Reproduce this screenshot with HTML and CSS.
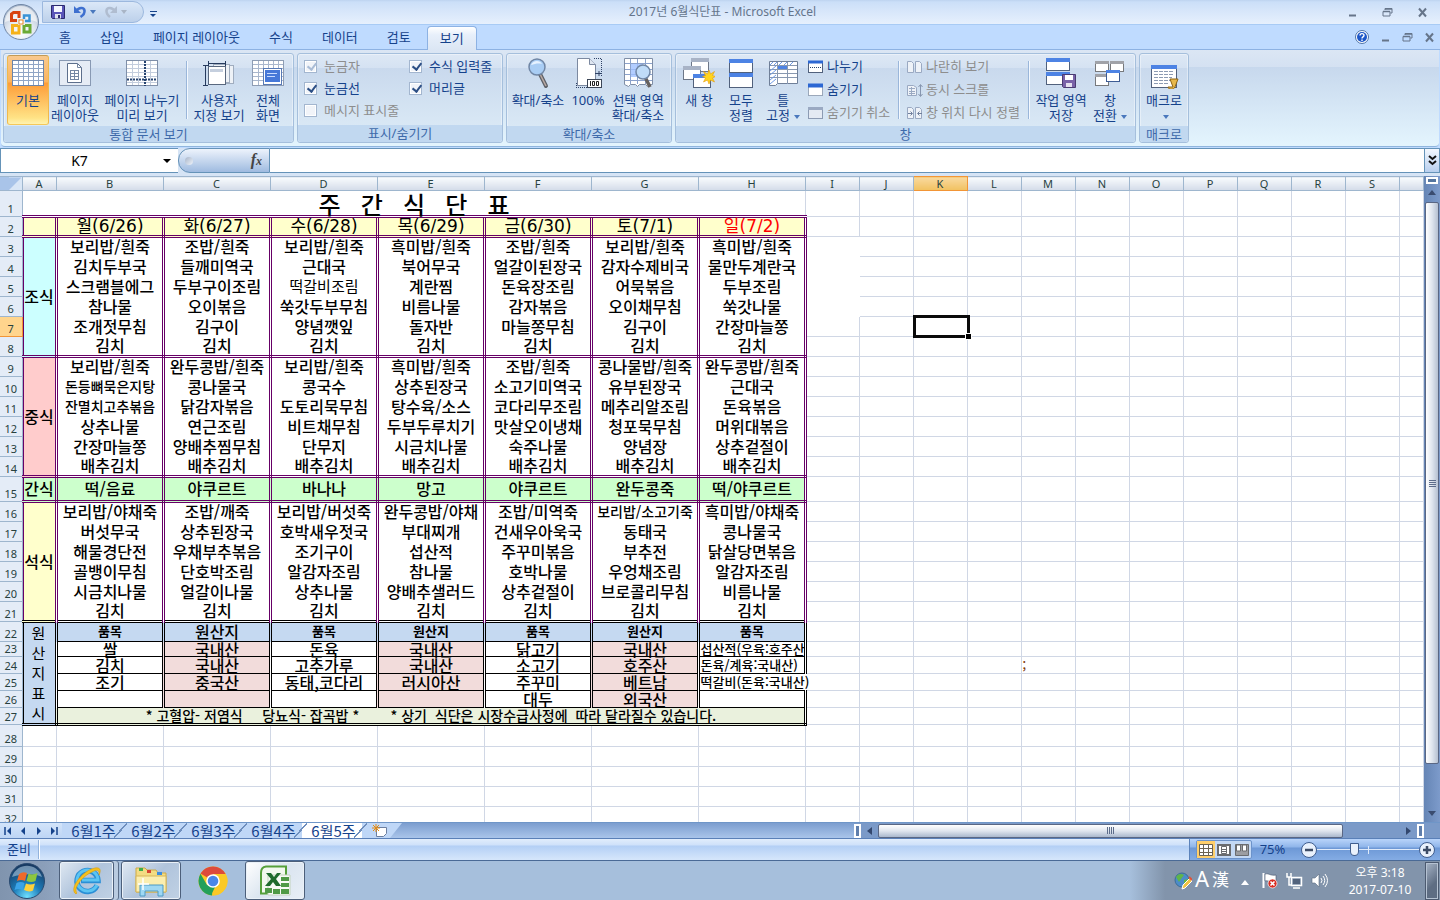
FILE: index.html
```html
<!DOCTYPE html>
<html lang="ko">
<head>
<meta charset="utf-8">
<title>2017년 6월식단표 - Microsoft Excel</title>
<link rel="stylesheet" href="styles.css">
</head>
<body>
<header class="titlebar">
  <button class="orb" aria-label="Office">
    <svg width="38" height="38" viewBox="0 0 38 38">
      <defs><radialGradient id="ob" cx=".5" cy=".8" r=".8"><stop offset="0" stop-color="#fff"/><stop offset=".5" stop-color="#dfe6ef"/><stop offset="1" stop-color="#a7b5c9"/></radialGradient></defs>
      <circle cx="19" cy="19" r="17.500" fill="url(#ob)" stroke="#6f86a6"/>
      <path d="M3 19a16 16 0 0 1 32 0c-8-4-22-4-32 0z" fill="#fff" opacity=".6"/>
      <g fill="none" stroke-width="3">
        <path d="M17 15V9.500h-5.500L9.500 11v6.500H15" stroke="#d8430f"/>
        <path d="M22 16v-3.500h5.500V18H23" stroke="#3a93d6" stroke-width="2.500"/>
        <path d="M17 22v8h-6.500v-7.500H16" stroke="#f5b21b"/>
        <path d="M22 22v7h6v-6.500h-5" stroke="#6aaa35"/>
      </g>
      <rect x="17" y="17" width="4" height="4" fill="#fff" stroke="#e98a24"/>
    </svg>
  </button>
  <div class="qat">
    <button aria-label="저장"><svg width="14" height="14" viewBox="0 0 14 14"><path d="M.5.500h13v13h-12l-1-1z" fill="#5a55b8" stroke="#2b2a6e"/><rect x="3" y="1" width="8" height="6" fill="#f4f6ff"/><rect x="4" y="9" width="6" height="4.500" fill="#dfe3ee"/><rect x="7" y="10" width="2" height="3" fill="#2b2a6e"/></svg></button>
    <button aria-label="실행 취소"><svg width="14" height="14" viewBox="0 0 14 14"><path d="M3 6c3-4 8-4 8.500-.5.300 2.500-1.500 5-4 6.500" fill="none" stroke="#3f70cf" stroke-width="2.600"/><path d="M1 1v7h7z" fill="#3f70cf"/></svg></button>
    <i class="caret"></i>
    <button aria-label="다시 실행" disabled><svg width="14" height="14" viewBox="0 0 14 14"><path d="M11 6C8 2 3 2 2.500 5.500 2.200 8 4 10.500 6 12" fill="none" stroke="#b0bdd0" stroke-width="2.600"/><path d="M13 1v7H6z" fill="#b0bdd0"/></svg></button>
    <i class="caret pale"></i>
  </div>
  <button class="qatmore" aria-label="빠른 실행 도구 모음 사용자 지정"><i></i></button>
  <h1>2017년 6월식단표 - Microsoft Excel</h1>
  <div class="wbtns">
    <button aria-label="최소화"><svg width="11" height="11" viewBox="0 0 11 11"><path d="M2 8.500h7" stroke="#66758a" stroke-width="2"/></svg></button>
    <button aria-label="이전 크기로"><svg width="11" height="11" viewBox="0 0 11 11"><path d="M3 3V1.500h7V6H8.500M1 4.500h7V9H1z" fill="none" stroke="#66758a"/><path d="M3 2h7M1 4.500h7" stroke="#66758a" stroke-width="1.500"/></svg></button>
    <button aria-label="닫기"><svg width="11" height="11" viewBox="0 0 11 11"><path d="M2 1.500l7 8M9 1.500l-7 8" stroke="#66758a" stroke-width="2"/></svg></button>
  </div>
</header>

<nav class="tabs">
  <button>홈</button><button>삽입</button><button>페이지 레이아웃</button><button>수식</button><button>데이터</button><button>검토</button><button class="on">보기</button>
  <div class="mdi">
    <button aria-label="도움말"><svg width="14" height="14" viewBox="0 0 14 14"><circle cx="7" cy="7" r="6.500" fill="#fff" stroke="#4f74a8"/><circle cx="7" cy="7" r="5" fill="#1d57c8"/><path d="M5 5.500C5 3 9 3 9 5.300 9 7 7 6.800 7 8.500M7 9.500V11" fill="none" stroke="#fff" stroke-width="1.400"/></svg></button>
    <button aria-label="창 최소화"><svg width="11" height="11" viewBox="0 0 11 11"><path d="M2 8.500h7" stroke="#66758a" stroke-width="2"/></svg></button>
    <button aria-label="창 복원"><svg width="11" height="11" viewBox="0 0 11 11"><path d="M3 3V1.500h7V6H8.500M1 4.500h7V9H1z" fill="none" stroke="#66758a"/><path d="M3 2h7M1 4.500h7" stroke="#66758a" stroke-width="1.500"/></svg></button>
    <button aria-label="창 닫기"><svg width="11" height="11" viewBox="0 0 11 11"><path d="M2 1.500l7 8M9 1.500l-7 8" stroke="#66758a" stroke-width="2"/></svg></button>
  </div>
</nav>

<section class="ribbon">
  <div class="group g1">
    <div class="body">
      <button class="big on w42"><svg width="32" height="32" viewBox="0 0 32 32"><rect x=".5" y="3.500" width="31" height="25" fill="#fff" stroke="#6c84a8"/><path d="M1 7.500h30M1 11.500h30M1 15.500h30M1 19.500h30M1 23.500h30M6.500 4v24M11.500 4v24M16.500 4v24M21.500 4v24M26.500 4v24" stroke="#8fa5c6"/></svg><span>기본</span></button>
      <button class="big w52"><svg width="32" height="32" viewBox="0 0 32 32"><rect x=".5" y="3.500" width="31" height="25" fill="#e6ecf5" stroke="#8899b3"/><path d="M8.500 6.500h10l4 4v15h-14z" fill="#fff" stroke="#5d6f8c"/><path d="M18.500 6.500v4h4M11 13.500h9M11 16.500h9M11 19.500h9M11 22.500h9M11.500 13v10M15.500 13v10M19.500 13v10" fill="none" stroke="#7587a3"/></svg><span>페이지<br>레이아웃</span></button>
      <button class="big w82"><svg width="32" height="32" viewBox="0 0 32 32"><rect x=".5" y="3.500" width="31" height="25" fill="#fff" stroke="#7f8fa8"/><path d="M1 7.500h30M1 11.500h30M1 15.500h30M1 19.500h30M1 25.500h30M6.500 4v24M12.500 4v24M24.500 4v24" stroke="#c3cddd"/><path d="M19 4v25M1 22.500h30" stroke="#26436f" stroke-width="2" stroke-dasharray="2 1"/></svg><span>페이지 나누기<br>미리 보기</span></button>
      <i class="sep"></i>
      <button class="big w58"><svg width="32" height="32" viewBox="0 0 32 32"><rect x="14.500" y="8.500" width="16" height="18" fill="#eef2f7" stroke="#a0adbf"/><rect x="10.500" y="7.500" width="16" height="18" fill="#eef2f7" stroke="#a0adbf"/><rect x="5.500" y="9.500" width="17" height="18" fill="#fff" stroke="#59687f"/><rect x="7" y="12" width="13" height="3" fill="#c5cfde"/><path d="M5 6.500h18M5.500 4v5M22.500 4v5M2.500 9v19M0 8.500h5M0 28.500h5" stroke="#273b5e"/></svg><span>사용자<br>지정 보기</span></button>
      <button class="big w42"><svg width="32" height="32" viewBox="0 0 32 32"><rect x=".5" y="3.500" width="31" height="25" fill="#fff" stroke="#8e9db4"/><path d="M1 7.500h30M1 11.500h30M1 15.500h30M1 19.500h30M1 23.500h30M6.500 4v24M11.500 4v24M16.500 4v24M21.500 4v24M26.500 4v24" stroke="#a9b7cd"/><rect x="11.500" y="11.500" width="18" height="16" fill="#fff" stroke="#5779b5"/><rect x="13" y="13" width="15" height="12" fill="#4678d8"/><path d="M15 16.500h10M15 19.500h8" stroke="#c8dbff"/></svg><span>전체<br>화면</span></button>
    </div><h2>통합 문서 보기</h2>
  </div>
  <div class="group g2">
    <div class="body checks">
      <label class="dis"><input type="checkbox" checked disabled>눈금자</label><label><input type="checkbox" checked>수식 입력줄</label>
      <label><input type="checkbox" checked>눈금선</label><label><input type="checkbox" checked>머리글</label>
      <label class="dis"><input type="checkbox" disabled>메시지 표시줄</label>
    </div><h2>표시/숨기기</h2>
  </div>
  <div class="group g3">
    <div class="body">
      <button class="big w58"><svg width="32" height="32" viewBox="0 0 32 32"><path d="M18 17l6 12" stroke="#5f6369" stroke-width="4" stroke-linecap="round"/><path d="M18 17l6 12" stroke="#b9a9a4" stroke-width="1.500"/><circle cx="15" cy="10" r="8" fill="#a9cdf4" stroke="#7086a5" stroke-width="1.500"/><path d="M9 8c2-5 9-5 11-1-4-1-7 0-11 1z" fill="#e6f2ff"/></svg><span>확대/축소</span></button>
      <button class="big w42"><svg width="32" height="32" viewBox="0 0 32 32"><path d="M22 1.500h7.500V19M4 30.500h12M4.500 26v5" fill="none" stroke="#2e4165" stroke-dasharray="1 1"/><path d="M5.500 1.500h12l6 6v21h-18z" fill="#fff" stroke="#7c89a0"/><path d="M17.500 1.500v6h6" fill="#dfe6f0" stroke="#7c89a0"/><path d="M23 16.500h6M27 14v5" stroke="#2e4165"/><rect x="15.500" y="22.500" width="14" height="8" fill="#fff" stroke="#3c4657"/><path d="M18.500 24v5M20.500 24.500h2v4h-2zM24.500 24.500h2v4h-2z" fill="none" stroke="#222"/></svg><span>100%</span></button>
      <button class="big w58"><svg width="32" height="32" viewBox="0 0 32 32"><path d="M2.500 1.500h28v26h-3l-2 2-2-2h-6l-2 2-2-2h-5l-2 2-4-2z" fill="#fff" stroke="#7f8ea6"/><path d="M3 6.500h27M3 12.500h27M3 17.500h27M3 23.500h27M8.500 2v25M15.500 2v25M23.500 2v25" stroke="#8ba2cc"/><rect x="9" y="7" width="12" height="13" fill="#9fc0ff" opacity=".8"/><path d="M23 20l5 10" stroke="#66615f" stroke-width="3.500"/><circle cx="21" cy="15" r="7" fill="#c0dcf8" stroke="#7086a5" stroke-width="1.500"/></svg><span>선택 영역<br>확대/축소</span></button>
    </div><h2>확대/축소</h2>
  </div>
  <div class="group g4">
    <div class="body">
      <button class="big w42"><svg width="32" height="32" viewBox="0 0 32 32"><rect x="8.500" y="1.500" width="17" height="13" fill="#fff" stroke="#6d7788"/><path d="M8 3h18" stroke="#a8b3c6" stroke-width="4"/><rect x=".5" y="9.500" width="17" height="13" fill="#fff" stroke="#6d7788"/><path d="M0 11h18" stroke="#a8b3c6" stroke-width="4"/><rect x="10.500" y="17.500" width="17" height="13" fill="#fff" stroke="#51617c"/><path d="M10 19h18" stroke="#4d83e4" stroke-width="4"/><path d="M26 13l1.500 4 4-2.500-2 4 3 1-3 1.500 2 4-4-2-1.500 4-1.500-4-4 2 2-4-3-1.500 3-1-2-4 4 2.500z" fill="#ffd51e" stroke="#e89c0a" stroke-width=".6"/></svg><span>새 창</span></button>
      <button class="big w42"><svg width="32" height="32" viewBox="0 0 32 32"><rect x="4.500" y="2.500" width="23" height="28" fill="#fff" stroke="#51617c"/><path d="M4 4h24M4 18h24" stroke="#4d83e4" stroke-width="4"/><path d="M4 15.500h24" stroke="#51617c"/></svg><span>모두<br>정렬</span></button>
      <button class="big w42"><svg width="32" height="32" viewBox="0 0 32 32"><path d="M2.500 4.500h28v22h-20l-2 2h-6z" fill="#fff" stroke="#6f7f98"/><path d="M3 8.500h27M3 12.500h27M3 16.500h27M3 20.500h27M10.500 5v22M20.500 5v22" stroke="#8898b0"/><path d="M3 8l3-3M7 8l3-3M12 8l3-3M17 8l3-3M23 8l3-3M3 14l6-5M3 18l6-5M3 23l6-5M3 27l6-5" stroke="#6f9be6"/><rect x="11" y="9" width="9" height="3" fill="#4d83e4"/></svg><span>틀<br>고정<i class="caret"></i></span></button>
      <div class="list l1">
        <button><svg width="16" height="14" viewBox="0 0 16 14"><rect x=".5" y="1.500" width="14" height="11" fill="#fff" stroke="#51617c"/><path d="M0 2h15" stroke="#2c67d3" stroke-width="3"/><path d="M2 7.500h12" stroke="#26436f" stroke-dasharray="1 1"/></svg>나누기</button>
        <button><svg width="16" height="14" viewBox="0 0 16 14"><rect x=".5" y="1.500" width="14" height="11" fill="#fff" stroke="#51617c" stroke-dasharray="1 1"/><path d="M0 2.500h15" stroke="#2c67d3" stroke-width="4"/></svg>숨기기</button>
        <button disabled><svg width="16" height="14" viewBox="0 0 16 14"><rect x=".5" y="1.500" width="14" height="11" fill="#e4eaf3" stroke="#8c9bb3"/><path d="M0 2.500h15" stroke="#9aa9c2" stroke-width="3"/></svg>숨기기 취소</button>
      </div>
      <i class="sep"></i>
      <div class="list l2">
        <button disabled><svg width="16" height="14" viewBox="0 0 16 14"><path d="M.5 1.500h4l2 2v9h-6zM8.500 1.500h4l2 2v9h-6z" fill="#eef2f8" stroke="#9aa9c2"/></svg>나란히 보기</button>
        <button disabled><svg width="16" height="14" viewBox="0 0 16 14"><path d="M.5 2.500h6l3 2v8h-9zM2 5.500h6M2 8.500h6M2 10.500h6M4.500 4v8" fill="#eef2f8" stroke="#9aa9c2"/><path d="M13.500 2v11M11.500 4l2-2.500 2 2.500M11.500 11l2 2.500 2-2.500" fill="none" stroke="#8796b0"/></svg>동시 스크롤</button>
        <button disabled><svg width="16" height="14" viewBox="0 0 16 14"><path d="M.5 1.500h4l2 2v9h-6zM8.500 1.500h4l2 2v9h-6z" fill="#eef2f8" stroke="#9aa9c2"/><path d="M1 7.500h4M3.500 5.500l2 2-2 2M15 7.500h-4M12.500 5.500l-2 2 2 2" fill="none" stroke="#6f7f9c"/></svg>창 위치 다시 정렬</button>
      </div>
      <i class="sep"></i>
      <button class="big w58"><svg width="32" height="32" viewBox="0 0 32 32"><rect x="1.500" y="1.500" width="23" height="12" fill="#fff" stroke="#51617c"/><path d="M1 3h24" stroke="#4d83e4" stroke-width="4"/><rect x="1.500" y="15.500" width="23" height="12" fill="#fff" stroke="#51617c"/><path d="M1 17h24" stroke="#4d83e4" stroke-width="4"/><path d="M17.500 17.500h13v13h-12l-1-1z" fill="#7a63a8" stroke="#4a3b72"/><rect x="20" y="18" width="8" height="5" fill="#fff"/><rect x="21" y="26" width="6" height="4" fill="#e5e1ef"/></svg><span>작업 영역<br>저장</span></button>
      <button class="big w42"><svg width="32" height="32" viewBox="0 0 32 32"><g fill="#fff" stroke="#77797c"><rect x="1.500" y="4.500" width="13" height="10"/><rect x="16.500" y="4.500" width="13" height="10"/><rect x="1.500" y="17.500" width="13" height="11"/></g><path d="M1 5.500h14M16 5.500h14M1 18.500h14" stroke="#a0a2a8" stroke-width="3"/><rect x="12.500" y="13.500" width="13" height="11" fill="#fff" stroke="#3d5c94"/><path d="M12 14.500h14" stroke="#4d83e4" stroke-width="3"/></svg><span>창<br>전환<i class="caret"></i></span></button>
    </div><h2>창</h2>
  </div>
  <div class="group g5">
    <div class="body">
      <button class="big w42"><svg width="32" height="32" viewBox="0 0 32 32"><rect x="3.500" y="8.500" width="25" height="22" fill="#fff" stroke="#51617c"/><path d="M3 10h26" stroke="#4d83e4" stroke-width="4"/><path d="M6 14.500h20M6 17.500h20M6 20.500h18M6 23.500h16M6 26.500h15" stroke="#8c9bb3" stroke-dasharray="4 1"/><path d="M22 22h8l-3 8c-1 3-7 3-7 0h5z" fill="#e8b84a" stroke="#8d6414"/></svg><span>매크로<br><i class="caret"></i></span></button>
    </div><h2>매크로</h2>
  </div>
</section>

<div class="fbar">
  <div class="namebox"><input aria-label="이름 상자" value="K7"><i class="dark"></i></div>
  <div class="fx"><b></b><button aria-label="함수 삽입"><em>f</em><sub>x</sub></button></div>
  <input class="formula" aria-label="수식 입력줄">
  <button class="expand" aria-label="수식 입력줄 확장"><svg width="9" height="11" viewBox="0 0 9 11"><path d="M1 1l3.500 3L8 1M1 6l3.500 3L8 6" fill="none" stroke="#111" stroke-width="2"/></svg></button>
</div>

<main class="work">
  <div class="sheet">
  <table>
    <colgroup><col class="c0"><col class="ca"><col class="cm" span="7"><col class="cs" span="11"><col></colgroup>
    <thead><tr><th class="corner"><th>A<th>B<th>C<th>D<th>E<th>F<th>G<th>H<th>I<th>J<th class="hot">K<th>L<th>M<th>N<th>O<th>P<th>Q<th>R<th>S<th></tr></thead>
    <tbody>
    <tr class="h26"><th>1<td colspan="8" class="title">주&nbsp;&nbsp;&nbsp;간&nbsp;&nbsp;&nbsp;식&nbsp;&nbsp;&nbsp;단&nbsp;&nbsp;&nbsp;표
      <td><td><td><td> <td><td><td><td> <td><td><td><td></tr>
    <tr class="days"><th>2<td class="m a"><td class="m">월(6/26)<td class="m">화(6/27)<td class="m">수(6/28)<td class="m">목(6/29)<td class="m">금(6/30)<td class="m">토(7/1)<td class="m red">일(7/2)
      <td><td><td><td> <td><td><td><td> <td><td><td><td></tr>
    <tr class="first"><th>3<td rowspan="6" class="m a cyan">조식<td class="m">보리밥/흰죽<td class="m">조밥/흰죽<td class="m">보리밥/흰죽<td class="m">흑미밥/흰죽<td class="m">조밥/흰죽<td class="m">보리밥/흰죽<td class="m">흑미밥/흰죽
      <td rowspan="4" class="clear"><td><td><td> <td><td><td><td> <td><td><td><td></tr>
    <tr><th>4<td class="m">김치두부국<td class="m">들깨미역국<td class="m">근대국<td class="m">북어무국<td class="m">얼갈이된장국<td class="m">감자수제비국<td class="m">물만두계란국
      <td><td><td> <td><td><td><td> <td><td><td><td></tr>
    <tr><th>5<td class="m">스크램블에그<td class="m">두부구이조림<td class="m thin">떡갈비조림<td class="m">계란찜<td class="m">돈육장조림<td class="m">어묵볶음<td class="m">두부조림
      <td><td><td> <td><td><td><td> <td><td><td><td></tr>
    <tr><th>6<td class="m">참나물<td class="m">오이볶음<td class="m">쑥갓두부무침<td class="m">비름나물<td class="m">감자볶음<td class="m">오이채무침<td class="m">쑥갓나물
      <td><td><td> <td><td><td><td> <td><td><td><td></tr>
    <tr><th class="hot">7<td class="m">조개젓무침<td class="m">김구이<td class="m">양념깻잎<td class="m">돌자반<td class="m">마늘쫑무침<td class="m">김구이<td class="m">간장마늘쫑
      <td><td><td class="cursor"><i></i><td> <td><td><td><td> <td><td><td><td></tr>
    <tr class="last"><th>8<td class="m">김치<td class="m">김치<td class="m">김치<td class="m">김치<td class="m">김치<td class="m">김치<td class="m">김치
      <td><td><td><td> <td><td><td><td> <td><td><td><td></tr>
    <tr class="first"><th>9<td rowspan="6" class="m a pink">중식<td class="m">보리밥/흰죽<td class="m">완두콩밥/흰죽<td class="m">보리밥/흰죽<td class="m">흑미밥/흰죽<td class="m">조밥/흰죽<td class="m">콩나물밥/흰죽<td class="m">완두콩밥/흰죽
      <td><td><td><td> <td><td><td><td> <td><td><td><td></tr>
    <tr><th>10<td class="m sm">돈등뼈묵은지탕<td class="m">콩나물국<td class="m">콩국수<td class="m">상추된장국<td class="m">소고기미역국<td class="m">유부된장국<td class="m">근대국
      <td><td><td><td> <td><td><td><td> <td><td><td><td></tr>
    <tr><th>11<td class="m sm">잔멸치고추볶음<td class="m">닭감자볶음<td class="m">도토리묵무침<td class="m">탕수육/소스<td class="m">코다리무조림<td class="m">메추리알조림<td class="m">돈육볶음
      <td><td><td><td> <td><td><td><td> <td><td><td><td></tr>
    <tr><th>12<td class="m">상추나물<td class="m">연근조림<td class="m">비트채무침<td class="m">두부두루치기<td class="m">맛살오이냉채<td class="m">청포묵무침<td class="m">머위대볶음
      <td><td><td><td> <td><td><td><td> <td><td><td><td></tr>
    <tr><th>13<td class="m">간장마늘쫑<td class="m">양배추찜무침<td class="m">단무지<td class="m">시금치나물<td class="m">숙주나물<td class="m">양념장<td class="m">상추겉절이
      <td><td><td><td> <td><td><td><td> <td><td><td><td></tr>
    <tr class="last"><th>14<td class="m">배추김치<td class="m">배추김치<td class="m">배추김치<td class="m">배추김치<td class="m">배추김치<td class="m">배추김치<td class="m">배추김치
      <td><td><td><td> <td><td><td><td> <td><td><td><td></tr>
    <tr class="snack h25"><th>15<td class="m a">간식<td class="m">떡/음료<td class="m">야쿠르트<td class="m">바나나<td class="m">망고<td class="m">야쿠르트<td class="m">완두콩죽<td class="m">떡/야쿠르트
      <td><td><td><td> <td><td><td><td> <td><td><td><td></tr>
    <tr class="first"><th>16<td rowspan="6" class="m a yel">석식<td class="m">보리밥/야채죽<td class="m">조밥/깨죽<td class="m">보리밥/버섯죽<td class="m">완두콩밥/야채<td class="m">조밥/미역죽<td class="m sm">보리밥/소고기죽<td class="m">흑미밥/야채죽
      <td><td><td><td> <td><td><td><td> <td><td><td><td></tr>
    <tr><th>17<td class="m">버섯무국<td class="m">상추된장국<td class="m">호박새우젓국<td class="m">부대찌개<td class="m">건새우아욱국<td class="m">동태국<td class="m">콩나물국
      <td><td><td><td> <td><td><td><td> <td><td><td><td></tr>
    <tr><th>18<td class="m">해물경단전<td class="m">우채부추볶음<td class="m">조기구이<td class="m">섭산적<td class="m">주꾸미볶음<td class="m">부추전<td class="m">닭살당면볶음
      <td><td><td><td> <td><td><td><td> <td><td><td><td></tr>
    <tr><th>19<td class="m">골뱅이무침<td class="m">단호박조림<td class="m">알감자조림<td class="m">참나물<td class="m">호박나물<td class="m">우엉채조림<td class="m">알감자조림
      <td><td><td><td> <td><td><td><td> <td><td><td><td></tr>
    <tr><th>20<td class="m">시금치나물<td class="m">얼갈이나물<td class="m">상추나물<td class="m">양배추샐러드<td class="m">상추겉절이<td class="m">브로콜리무침<td class="m">비름나물
      <td><td><td><td> <td><td><td><td> <td><td><td><td></tr>
    <tr><th>21<td class="m">김치<td class="m">김치<td class="m">김치<td class="m">김치<td class="m">김치<td class="m">김치<td class="m">김치
      <td><td><td><td> <td><td><td><td> <td><td><td><td></tr>
    <tr class="ohead"><th>22<td rowspan="6" class="o a blue">원<br>산<br>지<br>표<br>시<td class="o blue xs">품목<td class="o blue">원산지<td class="o blue xs">품목<td class="o blue xs">원산지<td class="o blue xs">품목<td class="o blue xs">원산지<td class="o blue xs">품목
      <td><td><td><td> <td><td><td><td> <td><td><td><td></tr>
    <tr class="h15"><th>23<td class="o">쌀<td class="o rose">국내산<td class="o">돈육<td class="o rose">국내산<td class="o">닭고기<td class="o rose">국내산<td class="o note">섭산적(우육:호주산
      <td><td><td><td> <td><td><td><td> <td><td><td><td></tr>
    <tr class="h17"><th>24<td class="o">김치<td class="o rose">국내산<td class="o">고추가루<td class="o rose">국내산<td class="o">소고기<td class="o rose">호주산<td class="o note">돈육/계육:국내산)
      <td><td><td><td> <td class="semi">;<td><td><td> <td><td><td><td></tr>
    <tr class="h17"><th>25<td class="o">조기<td class="o rose">중국산<td class="o">동태,코다리<td class="o rose">러시아산<td class="o">주꾸미<td class="o rose">베트남<td class="o note spill">떡갈비(돈육:국내산)
      <td class="after"><td><td><td> <td><td><td><td> <td><td><td><td></tr>
    <tr class="h17"><th>26<td class="o"><td class="o rose"><td class="o"><td class="o rose"><td class="o">대두<td class="o rose">외국산<td class="o">
      <td><td><td><td> <td><td><td><td> <td><td><td><td></tr>
    <tr class="h17 foot"><th>27<td colspan="7" class="o sm">* 고혈압- 저염식&nbsp;&nbsp;&nbsp;&nbsp; 당뇨식- 잡곡밥 *&nbsp;&nbsp;&nbsp;&nbsp;&nbsp;&nbsp;&nbsp; * 상기&nbsp; 식단은 시장수급사정에&nbsp; 따라 달라질수 있습니다.</td>
      <td><td><td><td> <td><td><td><td> <td><td><td><td></tr>
    <tr class="h22"><th>28<td><td><td><td> <td><td><td><td>
      <td><td><td><td> <td><td><td><td> <td><td><td><td></tr>
    <tr><th>29<td><td><td><td> <td><td><td><td>
      <td><td><td><td> <td><td><td><td> <td><td><td><td></tr>
    <tr><th>30<td><td><td><td> <td><td><td><td>
      <td><td><td><td> <td><td><td><td> <td><td><td><td></tr>
    <tr><th>31<td><td><td><td> <td><td><td><td>
      <td><td><td><td> <td><td><td><td> <td><td><td><td></tr>
    <tr><th>32<td><td><td><td> <td><td><td><td>
      <td><td><td><td> <td><td><td><td> <td><td><td><td></tr>
    </tbody>
  </table>
  </div>
  <div class="vscroll"><i class="split"></i><i class="up"></i><b></b><i class="down"></i></div>
</main>

<div class="bottom">
  <div class="navs">
    <button aria-label="첫 시트"><svg width="8" height="8" viewBox="0 0 8 8"><path d="M1 0v8" stroke="#15428b" stroke-width="1.500"/><path d="M7 0v8L3 4z" fill="#15428b"/></svg></button>
    <button aria-label="이전 시트"><svg width="8" height="8" viewBox="0 0 8 8"><path d="M6 0v8L2 4z" fill="#15428b"/></svg></button>
    <button aria-label="다음 시트"><svg width="8" height="8" viewBox="0 0 8 8"><path d="M2 0v8l4-4z" fill="#15428b"/></svg></button>
    <button aria-label="마지막 시트"><svg width="8" height="8" viewBox="0 0 8 8"><path d="M7 0v8" stroke="#15428b" stroke-width="1.500"/><path d="M1 0v8l4-4z" fill="#15428b"/></svg></button>
  </div>
  <div class="stabs"><button>6월1주</button><button>6월2주</button><button>6월3주</button><button>6월4주</button><button class="on">6월5주</button><button class="new" aria-label="워크시트 삽입"><svg width="16" height="13" viewBox="0 0 16 13"><path d="M4.500 3.500h10v6l-3 3h-7z" fill="#fff" stroke="#6c7fa0"/><path d="M4 0v8M0 4h8M1 1l6 6M7 1L1 7" stroke="#e58b12"/></svg></button></div>
  <div class="hscroll"><i class="grip"></i><i class="left"></i><b><s></s></b><i class="right"></i><i class="grip"></i></div>
</div>

<footer class="status">
  <span>준비</span><i class="vline"></i>
  <div class="zoomer">
    <div class="views">
      <button class="on" aria-label="기본"><svg width="14" height="12" viewBox="0 0 14 12"><path d="M.5.500h13v11H.5zM.5 4.500h13M.5 8.500h13M4.500.500v11M9.500.500v11" fill="#fff" stroke="#6b6252"/></svg></button>
      <button aria-label="페이지 레이아웃"><svg width="14" height="12" viewBox="0 0 14 12"><rect x="1" y="1" width="12" height="10" fill="#fff" stroke="#6a6c70" stroke-width="2"/><path d="M4.500 2.500h5v7h-5zM5 5.500h4M5 7.500h4" fill="none" stroke="#6a6c70"/></svg></button>
      <button aria-label="페이지 나누기 미리 보기"><svg width="14" height="12" viewBox="0 0 14 12"><path d="M.5.500h13v11H.5z" fill="#9b9da2" stroke="#6a6c70"/><path d="M1.500 1h4v6h-4zM7.500 1h4v6h-4z" fill="#fff" stroke="#6a6c70"/></svg></button>
    </div>
    <button class="pct">75%</button>
    <button class="round" aria-label="축소"><svg width="16" height="16" viewBox="0 0 16 16"><circle cx="8" cy="8" r="7.500" fill="#e9f1fc" stroke="#3f5d8e"/><path d="M4 8h8" stroke="#3d4c66" stroke-width="2.500"/></svg></button>
    <input type="range" aria-label="확대/축소" min="0" max="100" value="36">
    <button class="round" aria-label="확대"><svg width="16" height="16" viewBox="0 0 16 16"><circle cx="8" cy="8" r="7.500" fill="#e9f1fc" stroke="#3f5d8e"/><path d="M4 8h8M8 4v8" stroke="#3d4c66" stroke-width="2.500"/></svg></button>
  </div>
</footer>

<div class="taskbar">
  <button class="start" aria-label="시작"><svg width="38" height="38" viewBox="0 0 38 38"><defs><radialGradient id="st" cx=".5" cy=".95" r=".9"><stop offset="0" stop-color="#6fe0ff"/><stop offset=".45" stop-color="#1c7bb8"/><stop offset="1" stop-color="#173a63"/></radialGradient></defs><circle cx="19" cy="19" r="17.500" fill="url(#st)" stroke="#2a4a70"/><path d="M4 15c5-15 25-15 30 0-9-4-20-3-30 0z" fill="#b9d3e8" opacity=".55"/><path d="M11 12q4-3 8-1l-2 8q-4-2-8 0z" fill="#ef6a2a"/><path d="M20.500 11.500q4 2 9-.5l-2 8q-4 2-9 0z" fill="#8dc63f"/><path d="M8.500 21q4-2 8 0l-2 7q-4-2-8 0z" fill="#3ba3e8"/><path d="M18 21.500q4 2 9 0l-2 7q-4 2-9-.5z" fill="#ffd13b"/></svg></button>
  <button class="task stack" aria-label="Internet Explorer"><svg width="32" height="32" viewBox="0 0 32 32"><path d="M26 20.500A10.500 10.500 0 1 1 27 15.500H10" fill="none" stroke="#2a8fd6" stroke-width="5.500"/><path d="M26 20A10.500 10.500 0 1 1 27 15H11" fill="none" stroke="#5cc4f2" stroke-width="3"/><path d="M5 29C-3 24 12 5 24 3c6-1 6 3 4 7 1-5-2-6-7-3C10 12 2 24 6 28z" fill="#f6c11d" stroke="#d99a0a" stroke-width=".6"/></svg></button>
  <button class="task" aria-label="Windows 탐색기"><svg width="34" height="32" viewBox="0 0 34 32"><path d="M2 27V3h9l2 2h9l2 3h8v19z" fill="#f3dc83" stroke="#cda947"/><path d="M5 3h4v3H5z" fill="#3fae4a"/><path d="M13 5h4v3h-4z" fill="#d84432"/><path d="M23 7h5v3h-5z" fill="#3b8de0"/><path d="M2 11h30v16H2z" fill="#fbeeb0" stroke="#d6b659"/><path d="M6 31V20h23v11h-5v-5H11v5z" fill="#9fd8f3" stroke="#4c9ac4"/><path d="M9 13v12M4 19h11" stroke="#fff" stroke-width="1.500"/></svg></button>
  <button class="plain" aria-label="Chrome"><svg width="32" height="32" viewBox="0 0 32 32"><circle cx="16" cy="16" r="14.500" fill="#fbc926"/><path d="M16 16L3.500 8.500A14.500 14.500 0 0 1 28.600 9H16z" fill="#dd4a3b"/><path d="M16 16l-1 14.500A14.500 14.500 0 0 1 3.500 8.700L10 20l8 2-4 8.500z" fill="#23a05a"/><path d="M16 9h12.600a14.500 14.500 0 0 1-13 21.500L22 19.500z" fill="#fbc926"/><circle cx="16" cy="16" r="6.800" fill="#fff"/><circle cx="16" cy="16" r="5.300" fill="#4a86e8"/></svg></button>
  <button class="task lit" aria-label="Excel"><svg width="32" height="32" viewBox="0 0 32 32"><path d="M7 1.500h20v27H2V8q0-6 5-6.500z" fill="#f2f8ee" stroke="#56a03a" stroke-width="2"/><path d="M9 10h22v20H9z" fill="#f7fbf5" stroke="#c4d3be"/><path d="M22 12h8v4h-8zM22 18h8v4h-8zM14 24h7v5h-7zM22 24h8v5h-8zM6 23h7v5H6z" fill="#4f9a46"/><path d="M7 8h5l3 4 3-4h4l-5 6 5 7h-5l-3-4-3 4H6l6-7z" fill="#1f6b2c"/></svg></button>
  <div class="tray">
    <svg class="globe" width="18" height="18" viewBox="0 0 18 18"><circle cx="8" cy="8" r="7" fill="#4b8cc9" stroke="#3d6d95"/><path d="M2 5c3-4 6-3 8-2l-3 4-2 3zM10 8l4-1-1 4-3 3z" fill="#5fb548"/><path d="M8 17l1-4 7-7 2 3-7 7z" fill="#f1c444" stroke="#fff"/><path d="M15 5l3 3" stroke="#e05239" stroke-width="2"/></svg>
    <span class="ime">A</span><span class="han">漢</span>
    <i class="tri"></i>
    <svg class="flag" width="17" height="17" viewBox="0 0 17 17"><path d="M2.500 1v15" stroke="#fff" stroke-width="2"/><path d="M4 2c4-1 5 2 11 1v7c-6 1-7-2-11-1z" fill="#fff" stroke="#43526a" stroke-width=".6"/><circle cx="11.500" cy="11.500" r="4.500" fill="#d92c22" stroke="#fff" stroke-width=".7"/><path d="M9.500 9.500l4 4M13.500 9.500l-4 4" stroke="#fff" stroke-width="1.600"/></svg>
    <svg class="net" width="17" height="17" viewBox="0 0 17 17"><path d="M5.500 5.500h10v8h-10zM7 16h7M1 1v4h4V1M3 5v8h3" fill="none" stroke="#fff" stroke-width="1.500"/><rect x="7" y="7" width="7" height="5" fill="#52637c"/></svg>
    <svg class="spk" width="17" height="17" viewBox="0 0 17 17"><path d="M1 6h3l4-4v13l-4-4H1z" fill="#fff" stroke="#5d6c82" stroke-width=".6"/><path d="M10 6q2 2.500 0 5M12 4q3.500 4.500 0 9M14 2q5 6.500 0 13" fill="none" stroke="#fff"/></svg>
    <time>오후 3:18<br>2017-07-10</time>
    <button class="desk" aria-label="바탕 화면 보기"></button>
  </div>
</div>
</body>
</html>
```

FILE: styles.css
```css
* { box-sizing: border-box; }
body {
  margin: 0; height: 100vh; display: flex; flex-direction: column; overflow: hidden;
  font: 13px/15px "Noto Sans", "Noto Sans CJK KR", sans-serif; color: #15428b; background: #bfdbff;
}
button, input { font: inherit; color: inherit; margin: 0; padding: 0; border: 0; background: none; }
svg { display: block; }
h1, h2 { margin: 0; font-weight: 400; }
i { font-style: normal; }

.caret { display: inline-block; border: 3px solid transparent; border-top: 4px solid #4a78bd; border-bottom: 0; vertical-align: middle; margin-left: 4px; }
.caret.pale { border-top-color: #a9b5c6; }

/* Title bar */
.titlebar { flex: none; height: 25px; position: relative; display: flex; align-items: center; border-bottom: 1px solid #a8cbf5; background: linear-gradient(#bdd3ef 0, #cbdff8 2px, #d7e6fa 11px, #e6f0fd 24px); }
.orb { position: absolute; left: 2px; top: 3px; z-index: 2; }
.qat { margin-left: 42px; width: 102px; height: 22px; padding: 0 8px; display: flex; align-items: center; gap: 8px; border: 1px solid #9cb8de; border-radius: 0 11px 11px 0; background: linear-gradient(#dbe8f8, #bcd0ea); }
.qat .caret { margin: 0 0 0 -5px; }
.qatmore { width: 10px; height: 12px; margin-left: 4px; padding-top: 3px; border-top: 0; }
.qatmore i { display: block; width: 7px; height: 6px; margin: auto; border-top: 1px solid #15428b; position: relative; }
.qatmore i::after { content: ""; position: absolute; left: 0; top: 2px; border: 3px solid transparent; border-top: 3px solid #15428b; border-bottom: 0; }
.titlebar h1 { flex: 1; padding-right: 60px; text-align: center; font-size: 12px; line-height: 26px; color: #65758c; }
.wbtns { display: flex; gap: 24px; padding-right: 12px; align-items: center; }

/* Ribbon tabs */
.tabs { flex: none; height: 25px; display: flex; align-items: flex-end; gap: 1px; padding-left: 45px; background: #bfdbff; border-bottom: 1px solid #8db2e3; }
.tabs > button { height: 24px; padding: 0 14px; line-height: 25px; }
.tabs > button.on { margin: 0 0 -1px 1px; padding: 0 12px; line-height: 23px; background: linear-gradient(#fff, #e7effa 8px, #dbe6f4); border: 1px solid #8db2e3; border-bottom: 0; border-radius: 4px 4px 0 0; }
.mdi { margin-left: auto; display: flex; align-items: center; gap: 11px; padding: 0 5px 5px 0; }

/* Ribbon */
.ribbon { flex: none; height: 97px; margin: 0 1px 1px; padding: 3px 2px 3px; display: flex; gap: 3px; background: linear-gradient(#dbe6f4 0, #d4e1f2 17px, #c7d8ed 17px, #e3f4fd 94px); border-bottom: 1px solid #8fb5dd; border-radius: 0 0 4px 4px; }
.group { display: flex; flex-direction: column; border: 1px solid #a5bfdc; border-radius: 3px; background: linear-gradient(#dde8f5 0, #d5e2f2 14px, #c9d9ed 14px, #d9e8f5 72px); box-shadow: inset 0 0 0 1px #ffffff66; }
.g1 { width: 291px; } .g2 { width: 206px; } .g3 { width: 166px; } .g4 { width: 461px; } .g5 { width: 50px; }
.group h2 { height: 17px; font-size: 13px; line-height: 16px; text-align: center; white-space: nowrap; color: #3e6aaa; background: #c1d8f0; border-radius: 0 0 3px 3px; }
.body { flex: 1; display: flex; padding: 1px 3px; }
.big { display: flex; flex-direction: column; align-items: center; justify-content: flex-start; padding-top: 1px; height: 70px; white-space: nowrap; border-radius: 3px; border: 1px solid transparent; }
.big span { line-height: 15px; margin-top: 4px; text-align: center; }
.big.on { border-color: #c29b55 #f0b94c #f5c85a; background: linear-gradient(#f9c98e 0, #fbb45f 26px, #fd9c38 27px, #ffe386 62px, #fff2b0); }
.w42 { width: 42px; } .w52 { width: 52px; } .w58 { width: 56px; } .w82 { width: 82px; }
.sep { width: 2px; height: 58px; margin: 6px 3px 0; background: linear-gradient(90deg, #9ab6da 50%, #f3f8fe 50%); flex: none; }
.checks { display: grid; grid-template-columns: 105px auto; grid-auto-rows: 22px; padding: 1px 6px; }
.checks label { display: flex; align-items: center; gap: 7px; white-space: nowrap; }
.dis, .list button:disabled { color: #8d8d8d; }
.checks input { appearance: none; width: 13px; height: 13px; border: 1px solid #a3b6cf; background: #f1f4f9; box-shadow: inset 0 0 0 1px #fff; }
.checks input:checked::after { content: ""; display: block; width: 4px; height: 7px; margin: 0 0 0 4px; border: solid #2c4f85; border-width: 0 2px 2px 0; transform: rotate(38deg); }
.checks input:disabled::after { border-color: #a9bcd6; }
.list { display: grid; grid-auto-rows: 23px; }
.list button { display: flex; align-items: center; gap: 3px; white-space: nowrap; }
.l1 { width: 90px; margin-left: 4px; } .l2 { width: 121px; margin-left: 4px; }
.g3 .body { gap: 1px; }
.g4 .body { padding-left: 2px; }
.g4 .sep { margin-left: 0; margin-right: 3px; }

/* Formula bar */
.fbar { flex: none; height: 28px; padding: 0 0 3px; display: flex; align-items: stretch; background: #d6e4f5; }
.fbar > * { height: 25px; border: solid #6593b8; border-width: 1px 0; }
.namebox { width: 178px; display: flex; align-items: center; background: #fff; border-left-width: 1px; }
.namebox input { width: 157px; text-align: center; font-size: 14px; color: #000; }
.dark { border: 4px solid transparent; border-top: 4px solid #000; border-bottom: 0; margin-left: 5px; }
.fx { width: 92px; display: flex; align-items: center; justify-content: space-between; padding: 0 7px 0 6px; background: linear-gradient(#edf3fc, #9fbbe0); border-radius: 12px 0 0 12px; border-right-width: 1px; border-left-width: 1px; }
.fx b { width: 8px; height: 8px; border-radius: 50%; background: linear-gradient(135deg, #a8b5c9, #eef3fa); }
.fx button { font: italic 700 16px/16px "Liberation Serif", serif; color: #444; }
.fx sub { font-size: 12px; vertical-align: baseline; }
.formula { flex: 1; background: #fff; }
.expand { width: 16px; display: flex; align-items: center; justify-content: center; background: linear-gradient(#f3f8ff, #b8cfee); border-width: 1px; }

/* Worksheet */
.work { flex: 1; min-height: 0; display: flex; background: #fff; }
.sheet { flex: 1; min-width: 0; overflow: hidden; }
table { width: 100%; table-layout: fixed; border-collapse: collapse; font: 500 16px/14px "Noto Sans CJK KR", sans-serif; color: #000; }
.c0 { width: 22px; } .ca { width: 34px; } .cm { width: 107px; } .cs { width: 54px; }
tr { height: 20px; }
thead tr { height: 14px; }
td, th { padding: 0; border: 1px solid #d0d7e5; text-align: center; white-space: nowrap; }
td { padding-bottom: 2px; }
th { font: 400 11px/11px "Noto Sans", sans-serif; color: #27413e; background: #e4ecf7; border-color: #9eb6ce; vertical-align: bottom; }
tbody th { padding-bottom: 2px; }
thead th { background: linear-gradient(#f9fcfd, #d3dbe9); vertical-align: middle; }
thead th:first-child, tbody th { border-left: 0; }
.corner { background: linear-gradient(135deg, #a9c4e9 60%, #d9e6f6 60%); }
th.hot { background: #ffd58d; border-color: #f29536; }
thead th.hot { background: linear-gradient(#f9d99f, #f1c15f); }
.h26 { height: 26px; } .h25 { height: 25px; } .h22 { height: 22px; } .h15 { height: 15px; } .h17 { height: 17px; }
.h15 td, .h17 td { line-height: 12px; padding-bottom: 1px; }
td.title { font-size: 24px; line-height: 20px; border-bottom: 3px double #606; padding: 2px 0 0 1px; }
.m { border: 3px double #606; border-top-style: none; border-bottom-style: none; padding-left: 1px; }
td.a { border-left: 0; box-shadow: inset 1px 0 #606; }
.days .m, .snack .m { border-top-style: double; border-bottom-style: double; }
.days .m { background: #ffc; font: 17px/15px "DejaVu Sans", "Noto Sans CJK KR", sans-serif; padding-bottom: 1px; }
.days .red { color: #f00; }
.snack .m { background: #cfc; }
.cyan { background: #cff; } .pink { background: #fcc; } .yel { background: #ffc; }
.first .m { border-top-style: double; padding-bottom: 2px; }
.last .m, td.cyan, td.pink { border-bottom-style: double; }
.last .m { padding-bottom: 1px; }
.sm { font-size: 14px; }
.xs { font-size: 13px; font-weight: 700; }
.thin { font-size: 15px; font-weight: 400; }
.clear { border-color: #fff; }
.o { border: 1px solid #000; border-left: 3px double #000; border-right: 3px double #000; padding-left: 1px; }
.ohead .o { border-top: 3px double #000; }
td.o.a { border-bottom: 3px double #000; border-left: 0; box-shadow: inset 1px 0 #000; font-size: 15px; font-weight: 400; line-height: 20px; padding: 0; }
.foot .o { border-bottom: 3px double #000; background: #eaf1dd; white-space: pre; }
.blue { background: #c5d9f1; } .rose { background: #f2dcdb; }
.note { font-size: 13px; text-align: left; overflow: hidden; }
.spill { overflow: visible; border-right: 1px solid #fff; }
.after { border-left-color: #fff; }
.semi { text-align: left; padding-left: 1px; font-size: 12px; color: #833c0b; }
.cursor { position: relative; }
.cursor i { position: absolute; inset: -2px -3px -2px -1px; border: 3px solid #0a0a0a; }
.cursor i::after { content: ""; position: absolute; right: -4px; bottom: -4px; width: 5px; height: 5px; background: #000; outline: 1px solid #fff; }

/* Scroll bars */
.vscroll { flex: none; width: 16px; display: flex; flex-direction: column; align-items: center; background: linear-gradient(90deg, #6585b5, #7d9bcb); }
.vscroll .split { width: 12px; height: 7px; margin-top: 1px; border: 2px solid #fff; background: #54759f; }
.vscroll .up, .vscroll .down { border: 4px solid transparent; }
.vscroll .up { border-bottom: 5px solid #3a4c70; border-top: 0; margin: 6px 0 7px; }
.vscroll .down { border-top: 5px solid #3a4c70; border-bottom: 0; margin: auto 0 6px; }
.vscroll b { flex: none; width: 14px; height: 87%; border: 1px solid #5a6784; border-radius: 2px; background: repeating-linear-gradient(#5c6c8a 0 1px, #fff0 1px 2px) center / 7px 7px no-repeat, linear-gradient(90deg, #fff, #dfe5ee 50%, #b5c0d1); }

.bottom { flex: none; height: 17px; display: flex; background: #8fadd9; border-bottom: 1px solid #5a80b8; border-top: 1px solid #6f96c8; }
.navs { width: 62px; display: flex; align-items: center; justify-content: space-between; padding: 0 4px; background: linear-gradient(#d3e4fa, #bdd5f5); }
.stabs { flex: 1; display: flex; background: linear-gradient(#7c9ecf, #a9c4ea); }
.stabs button { position: relative; width: 60px; background: #bfd7f7; font-size: 15px; line-height: 14px; padding-left: 3px; white-space: nowrap; font-family: "Noto Sans CJK KR", sans-serif; }
.stabs button::after { content: ""; position: absolute; right: -5px; top: 0; z-index: 1; width: 13px; height: 15px; background: linear-gradient(to bottom right, transparent 46%, #6f8fbe 46% 54%, transparent 54%); }
.stabs .on { background: #fff; }
.stabs .new { width: 40px; padding-left: 10px; clip-path: polygon(0 0, 100% 0, 70% 100%, 0 100%); }
.hscroll { width: 586px; padding-right: 16px; display: flex; align-items: center; background: #7b9ac8; }
.hscroll .grip { flex: none; width: 7px; height: 14px; border: 2px solid #fff; background: #5f7eac; }
.hscroll .left, .hscroll .right { border: 4px solid transparent; }
.hscroll .left { border-right: 5px solid #33476d; border-left: 0; margin: 0 6px; }
.hscroll .right { border-left: 5px solid #33476d; border-right: 0; margin: 0 6px 0 auto; }
.hscroll b { width: 465px; height: 14px; display: flex; align-items: center; justify-content: center; border: 1px solid #5a6784; border-radius: 2px; background: linear-gradient(#fff, #dfe5ee 50%, #a9b8cd); }
.hscroll s { width: 8px; height: 7px; background: repeating-linear-gradient(90deg, #5c6c8a 0 1px, #fff0 1px 2px); }

/* Status bar */
.status { flex: none; height: 22px; display: flex; align-items: center; padding-left: 7px; border-bottom: 1px solid #4a6a96; background: linear-gradient(#e1edfc, #cfe1fa 6px, #b3cff5 7px, #d4e5fb 20px); }
.vline { width: 2px; height: 19px; margin-left: 7px; background: linear-gradient(90deg, #93b3dd 50%, #fff 50%); }
.zoomer { margin-left: auto; height: 21px; display: flex; align-items: center; padding: 0 5px 0 6px; border-left: 1px solid #5c83bb; background: linear-gradient(#b9d4fa, #8fb5ea 8px, #6d98d6 9px, #84ace4); }
.views { display: flex; border: 1px solid #6c93cb; border-radius: 2px; background: #c3d8f4; }
.views button { width: 18px; height: 17px; display: grid; place-items: center; }
.views .on { background: #ffcf6b; }
.pct { width: 41px; }
.round { margin-left: 8px; }
.zoomer input { appearance: none; width: 102px; height: 16px; background: linear-gradient(#dfeafa, #dfeafa) center / 100% 1px no-repeat, linear-gradient(#dfeafa, #dfeafa) 50% 50% / 1px 8px no-repeat; }
.zoomer input::-webkit-slider-thumb { appearance: none; width: 9px; height: 13px; background: #e9f1fc; border: 1px solid #3f5d8e; border-radius: 1px 1px 5px 5px; }
.zoomer input + .round { margin-left: 0; }

/* Taskbar */
.taskbar { flex: none; height: 39px; display: flex; align-items: center; background: linear-gradient(90deg, #8094ae 0, #8b9fba 45px, #a6bfdc 110px, #a6bfdc 1130px, #8294ab 1165px); }
.start { margin-left: 8px; }
.task { width: 60px; height: 39px; margin-left: 2px; display: grid; place-items: center; border: 1px solid #4c5f7a; border-radius: 3px; background: linear-gradient(135deg, #dfe8f2, #b0c4dc 50%, #c0d1e4); box-shadow: inset 0 0 0 1px #eaf1f8; }
.task.stack { width: 55px; margin: 0 5px 0 13px; box-shadow: inset 0 0 0 1px #eaf1f8, 4px 0 #b9cbe0, 5px 0 #5c6f8a; }
.task.lit { background: linear-gradient(135deg, #fff, #dbe5f0 50%, #e8eff7); margin-left: 0; }
.plain { width: 64px; display: grid; place-items: center; }
.tray { margin-left: auto; height: 39px; display: flex; align-items: center; color: #fff; }
.ime { margin: 0 0 6px 3px; font: 22px/24px "Noto Sans", sans-serif; }
.han { margin: 0 0 4px 3px; font: 17px/24px "Noto Sans CJK KR", sans-serif; }
.tri { border: 4px solid transparent; border-bottom: 5px solid #fff; border-top: 0; margin: 4px 12px 0; }
.flag, .net { margin-right: 8px; }
.tray time { margin-left: 18px; width: 68px; text-align: center; font-size: 12px; line-height: 17px; }
.desk { width: 14px; height: 38px; margin: 0 1px 0 11px; border: 1px solid #4c5a70; background: linear-gradient(135deg, #a6b4c6, #5e6d83 60%); box-shadow: inset 0 0 0 1px #b5c2d2; }
```
